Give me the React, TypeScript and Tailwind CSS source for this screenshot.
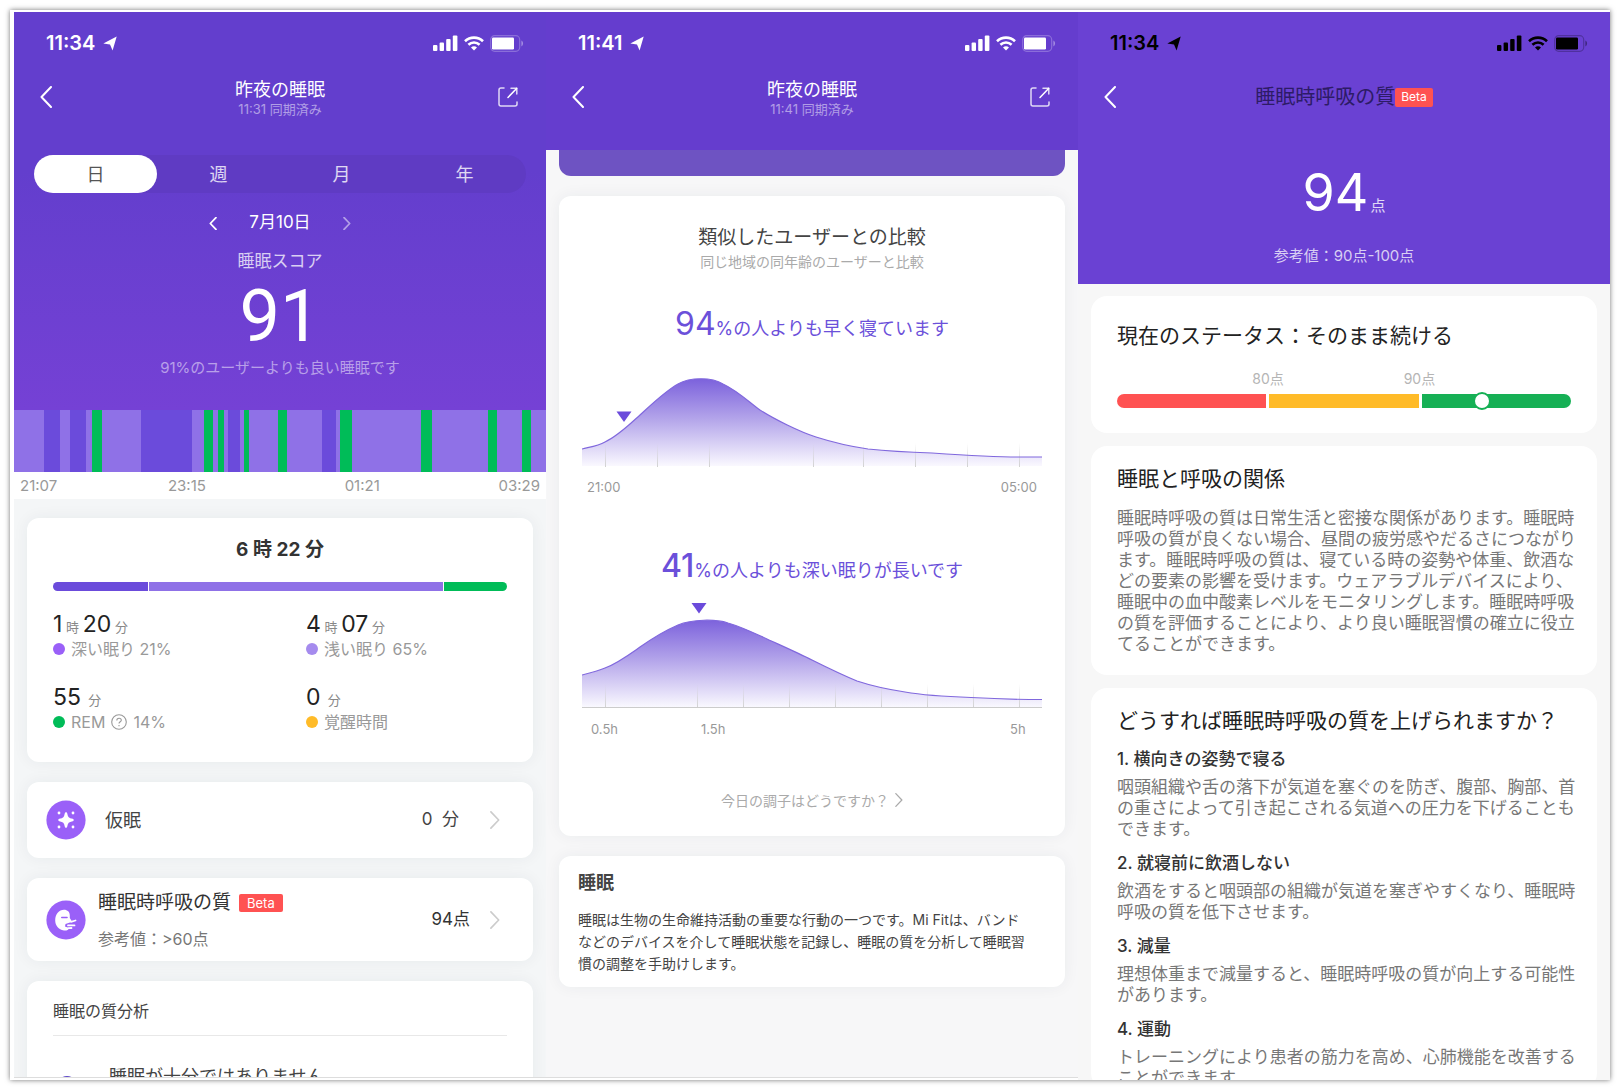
import { ReactNode } from "react";

const FONT = "font-['Inter','Noto_Sans_CJK_JP',sans-serif]";

function LocationArrow() {
  return (
    <svg viewBox="0 0 14 15" className="h-[15px] w-[14px]" aria-hidden="true">
      <path d="M0.3 7.6 13.7 0.6 9.6 14.4 7 8.4Z" fill="currentColor" />
      <path d="M7.6 6.600 10.600 4.200 8.900 8.800Z" fill="currentColor" fillOpacity="0.3" />
    </svg>
  );
}

function StatusIcons() {
  return (
    <div className="flex items-center gap-1.5">
      <svg viewBox="0 0 25 16" className="h-4 w-[25px]" aria-hidden="true" fill="currentColor">
        <rect x="0" y="10" width="4.4" height="6" rx="1" />
        <rect x="6.6" y="7.5" width="4.4" height="8.5" rx="1" />
        <rect x="13.2" y="4" width="4.4" height="12" rx="1" />
        <rect x="19.8" y="0.5" width="4.6" height="15.5" rx="1" />
      </svg>
      <svg viewBox="0 0 20 15" className="h-[15px] w-5" aria-hidden="true" fill="none" stroke="currentColor" strokeWidth="2.6">
        <path d="M1 5.2C6 .4 14 .4 19 5.2" />
        <path d="M4.4 8.8C7.6 5.8 12.4 5.8 15.6 8.8" />
        <path d="M7 11.4C8.8 9.9 11.2 9.9 13 11.4L10 14.6Z" fill="currentColor" stroke="none" />
      </svg>
      <svg viewBox="0 0 34 17" className="h-[17px] w-[34px]" aria-hidden="true">
        <rect x="0.7" y="0.7" width="29" height="15.6" rx="4" fill="none" stroke="currentColor" strokeOpacity="0.25" strokeWidth="1.2" />
        <rect x="2" y="2.6" width="22" height="11.8" rx="1.2" fill="currentColor" />
        <path d="M31.4 5.6C33.6 6.4 33.6 10.6 31.4 11.4Z" fill="currentColor" fillOpacity="0.4" />
      </svg>
    </div>
  );
}

function StatusBar({ time, dark = false }: { time: string; dark?: boolean }) {
  return (
    <div className={`flex h-[62px] items-center justify-between pr-[22px] pl-8 ${dark ? "text-black" : "text-white"}`}>
      <div className="flex items-center gap-2 text-[20px] leading-6 font-semibold">
        <span>{time}</span>
        <LocationArrow />
      </div>
      <StatusIcons />
    </div>
  );
}

function Chevron({ dir, className }: { dir: "left" | "right"; className: string }) {
  return (
    <svg viewBox="0 0 12 22" className={className} fill="none" stroke="currentColor" strokeWidth="2" strokeLinecap="round" strokeLinejoin="round" aria-hidden="true">
      <path d={dir === "left" ? "M11 1 1.5 11 11 21" : "M1 1 10.5 11 1 21"} />
    </svg>
  );
}

function NavBar({ children, share = false }: { children: ReactNode; share?: boolean }) {
  return (
    <div className="grid h-[46px] grid-cols-[40px_1fr_40px] items-center px-[18px] text-white">
      <button type="button" aria-label="戻る" className="flex h-10 items-center pl-2">
        <Chevron dir="left" className="h-[22px] w-3" />
      </button>
      <div className="flex flex-col items-center">{children}</div>
      {share && (
        <button type="button" aria-label="共有" className="flex h-10 items-center justify-end pr-2.5">
          <svg viewBox="0 0 20 20" className="size-5" fill="none" stroke="currentColor" strokeWidth="1.5" strokeLinecap="round" strokeLinejoin="round" aria-hidden="true">
            <path d="M6 1H3A2 2 0 0 0 1 3V17A2 2 0 0 0 3 19H17A2 2 0 0 0 19 17V15" strokeOpacity="0.8" />
            <path d="M13 1.2H18.8V7" strokeOpacity="0.8" />
            <path d="M18.6 1.4 10 10.4" />
          </svg>
        </button>
      )}
    </div>
  );
}

function SyncTitle({ time }: { time: string }) {
  return (
    <>
      <h1 className="pt-[3px] text-[18px] leading-5">昨夜の睡眠</h1>
      <p className="text-[13px] leading-[18px] text-white/50">{time} 同期済み</p>
    </>
  );
}

const STAGES: [number, string][] = [
  [30, "bg-[#8f71e7]"], [16, "bg-[#6b4bdb]"], [10, "bg-[#8f71e7]"], [16, "bg-[#6b4bdb]"], [6, "bg-[#8f71e7]"],
  [10, "bg-[#00bc58]"], [39, "bg-[#8f71e7]"], [51, "bg-[#6b4bdb]"], [12, "bg-[#8f71e7]"], [9, "bg-[#00bc58]"],
  [5, "bg-[#8f71e7]"], [6, "bg-[#00bc58]"], [4, "bg-[#8f71e7]"], [12, "bg-[#6b4bdb]"], [4, "bg-[#8f71e7]"],
  [5, "bg-[#00bc58]"], [29, "bg-[#8f71e7]"], [9, "bg-[#00bc58]"], [35, "bg-[#8f71e7]"], [14, "bg-[#6b4bdb]"],
  [4, "bg-[#8f71e7]"], [12, "bg-[#00bc58]"], [69, "bg-[#8f71e7]"], [11, "bg-[#00bc58]"], [56, "bg-[#8f71e7]"],
  [9, "bg-[#00bc58]"], [25, "bg-[#8f71e7]"], [9, "bg-[#00bc58]"], [15, "bg-[#8f71e7]"],
];

function Big({ children }: { children: ReactNode }) {
  return <span className="text-[23px] text-[#222]">{children}</span>;
}

function Stat({ value, dot, label }: { value: ReactNode; dot: string; label: ReactNode }) {
  return (
    <div>
      <dd className="h-[26px] text-[13px] leading-6 text-[#888]">{value}</dd>
      <dt className="flex h-[22px] items-center gap-1.5 text-[16px] leading-[22px] text-[#999]">
        <span className={`size-3 rounded-full ${dot}`} />
        {label}
      </dt>
    </div>
  );
}

const CARD = "rounded-xl bg-white shadow-[0_0_16px_rgba(40,50,60,0.06)]";

function SleepPanel() {
  return (
    <section className="mb-0.5 flex min-w-0 flex-col overflow-hidden border-b border-[#ddd] bg-[#f4f6f7]">
      <header className="bg-linear-to-b from-[#633ecd] from-40% to-[#7541d5] text-white">
        <StatusBar time="11:34" />
        <NavBar share>
          <SyncTitle time="11:31" />
        </NavBar>
        <div className="mx-5 mt-[35px] grid h-[38px] grid-cols-4 rounded-full bg-[#5f3bc3] text-[18px]">
          <button type="button" className="rounded-full bg-white text-[#555]">日</button>
          <button type="button" className="text-white/80">週</button>
          <button type="button" className="text-white/80">月</button>
          <button type="button" className="text-white/80">年</button>
        </div>
        <div className="mt-4 flex h-7 items-center justify-center gap-8 text-[17px]">
          <button type="button" aria-label="前の日"><Chevron dir="left" className="h-[13px] w-2 stroke-3" /></button>
          <span>7月10日</span>
          <button type="button" aria-label="次の日" className="text-white/50"><Chevron dir="right" className="h-[13px] w-2 stroke-3" /></button>
        </div>
        <p className="mt-3 text-center text-[17px] leading-6 text-white/75">睡眠スコア</p>
        <p className="mt-1 text-center font-['Liberation_Sans_Narrow','Roboto',sans-serif] text-[72px] leading-[79px]">91</p>
        <p className="pb-[30px] text-center text-[15px] leading-6 text-white/50">91%のユーザーよりも良い睡眠です</p>
      </header>
      <div className="flex h-[62px] shrink-0">
        {STAGES.map(([w, color], i) => (
          <div key={i} className={color} style={{ flexGrow: w, flexBasis: 0 }} />
        ))}
      </div>
      <div className="flex h-[27px] shrink-0 items-center justify-between bg-white px-1.5 text-[15px] leading-6 text-[#999]">
        <span>21:07</span>
        <span className="mr-7">23:15</span>
        <span className="mr-2">01:21</span>
        <span>03:29</span>
      </div>

      <div className="mt-[19px] flex shrink-0 flex-col gap-5 px-[13px]">
        <div className={`${CARD} px-[26px] pt-[18px] pb-[29px]`}>
          <h2 className="text-center text-[19px] leading-7 font-bold text-[#333]">6 時 22 分</h2>
          <div className="mt-[18px] flex h-[9px] gap-px overflow-hidden rounded-full">
            <div className="grow-21 bg-[#6b4bdb]" />
            <div className="grow-65 bg-[#8f71e7]" />
            <div className="grow-14 bg-[#00bc58]" />
          </div>
          <dl className="mt-[21px] grid grid-cols-[253px_1fr] gap-y-[25px]">
            <Stat value={<><Big>1</Big> 時 <Big>20</Big> 分</>} dot="bg-[#9a60f8]" label="深い眠り 21%" />
            <Stat value={<><Big>4</Big> 時 <Big>07</Big> 分</>} dot="bg-[#a58bee]" label="浅い眠り 65%" />
            <Stat
              value={<><Big>55</Big>&nbsp; 分</>}
              dot="bg-[#00bc58]"
              label={
                <>
                  REM
                  <svg viewBox="0 0 16 16" className="size-4" fill="none" stroke="currentColor" strokeWidth="1.1" aria-hidden="true">
                    <circle cx="8" cy="8" r="7.3" />
                    <path d="M5.8 6.4C5.8 3.4 10.3 3.6 10.3 6.2 10.3 7.8 8 7.8 8 9.6M8 10.9V12.2" />
                  </svg>
                  14%
                </>
              }
            />
            <Stat value={<><Big>0</Big>&nbsp; 分</>} dot="bg-[#ffbb28]" label="覚醒時間" />
          </dl>
        </div>

        <button type="button" className={`${CARD} flex h-[76px] items-center pr-[33px] pl-[19px] text-left text-[#444]`}>
          <NapIcon />
          <span className="ml-[19px] grow text-[18px]">仮眠</span>
          <span className="mr-[31px] text-[17px]">0&nbsp; 分</span>
          <Chevron dir="right" className="h-[18px] w-2.5 text-[#ccc]" />
        </button>

        <button type="button" className={`${CARD} flex h-[83px] items-center pr-[33px] pl-[19px] text-left`}>
          <BreathIcon />
          <span className="ml-3 flex grow flex-col gap-2.5">
            <span className="flex items-center gap-2 text-[19px] leading-7 text-[#333]">
              睡眠時呼吸の質
              <Beta className="h-[18px] px-2 text-[13px]" />
            </span>
            <span className="text-[16px] leading-6 text-[#777]">参考値：&gt;60点</span>
          </span>
          <span className="mr-5 text-[17px] text-[#333]">94点</span>
          <Chevron dir="right" className="h-[18px] w-2.5 text-[#ccc]" />
        </button>

        <div className={`${CARD} px-[26px]`}>
          <h2 className="border-b border-[#e8e8e8] pt-[18px] pb-3 text-[16px] leading-6 text-[#444]">睡眠の質分析</h2>
          <div className="flex h-20 items-center pl-1">
            <span className="mb-5 size-5 self-end rounded-full bg-[#5d48c8]" />
            <span className="ml-8 text-[18px] text-[#444]">睡眠が十分ではありません</span>
          </div>
        </div>
      </div>
    </section>
  );
}

function Beta({ className }: { className: string }) {
  return <span className={`flex items-center rounded-xs bg-[#ff5252] leading-4 text-white ${className}`}>Beta</span>;
}

function NapIcon() {
  return (
    <svg viewBox="0 0 40 40" className="size-10 shrink-0" aria-hidden="true">
      <circle cx="20" cy="20" r="19.6" fill="#9a60f8" />
      <path d="M20 13.500C20.800 18 22 19.200 26.500 20 22 20.800 20.800 22 20 26.500 19.200 22 18 20.800 13.500 20 18 19.200 19.200 18 20 13.500Z" fill="#fff" stroke="#fff" strokeWidth="2.4" strokeLinejoin="round" />
      <g fill="#fff">
        <circle cx="13" cy="13" r="1.4" />
        <circle cx="27" cy="13" r="1.4" />
        <circle cx="13" cy="27" r="1.4" />
        <circle cx="27" cy="27" r="1.4" />
      </g>
    </svg>
  );
}

function BreathIcon() {
  return (
    <svg viewBox="0 0 40 40" className="size-10 shrink-0" aria-hidden="true">
      <circle cx="20" cy="20" r="19.6" fill="#9a60f8" />
      <path d="M18 9.800C21.500 9.800 23.800 12 23.800 15.500V18L25.800 21.200 24 22.500 19.500 24 19 26.500 23 28C22.500 30 20.500 30.800 18 30.500 12.500 29.500 9.200 25.500 9.200 20.200 9.200 14 13 9.800 18 9.800Z" fill="#fff" />
      <path d="M15.800 17.500H21" stroke="#9a60f8" strokeWidth="1.6" strokeLinecap="round" />
      <path d="M25 21.800 29.500 20.500M22 25.400H28.500M22.500 28.200 25.500 28" stroke="#fff" strokeWidth="1.800" strokeLinecap="round" />
    </svg>
  );
}

type CurveProps = { id: string; line: string; ticks: number[]; marker: string; base?: boolean };

function Curve({ id, line, ticks, marker, base = false }: CurveProps) {
  return (
    <svg viewBox="0 0 460 110" className="block w-full" aria-hidden="true">
      <defs>
        <linearGradient id={id} x1="0" y1="22" x2="0" y2="110" gradientUnits="userSpaceOnUse">
          <stop offset="0" stopColor="#7c62dc" />
          <stop offset="0.45" stopColor="#b3a4ea" />
          <stop offset="1" stopColor="#fbfaff" />
        </linearGradient>
        <linearGradient id={`${id}-tick`} x1="0" y1="86" x2="0" y2="110" gradientUnits="userSpaceOnUse">
          <stop offset="0" stopColor="#ccc" stopOpacity="0" />
          <stop offset="1" stopColor="#ccc" stopOpacity="0.9" />
        </linearGradient>
      </defs>
      <path d={`${line}V109H0Z`} fill={`url(#${id})`} />
      {ticks.map((x) => (
        <rect key={x} x={x} y="86" width="1" height="24" fill={`url(#${id}-tick)`} />
      ))}
      {base && <rect x="0" y="109" width="460" height="1" fill="#ccc" />}
      <path d={line} fill="none" stroke="#8068dd" strokeWidth="1.2" />
      <path d={marker} fill="#6b4bdb" />
    </svg>
  );
}

function ComparePanel() {
  return (
    <section className="mb-0.5 flex min-w-0 flex-col overflow-hidden border-b border-[#ddd] bg-[#f7f7f8]">
      <header className="relative z-10 h-[138px] shrink-0 bg-[#653dce]">
        <StatusBar time="11:41" />
        <NavBar share>
          <SyncTitle time="11:41" />
        </NavBar>
      </header>
      <div className="flex shrink-0 flex-col gap-5 px-[13px]">
        <div className="h-[26px] rounded-b-xl bg-[#6e53c2]" />
        <div className={`${CARD} px-[23px] pt-[30px] pb-6 text-center`}>
          <h2 className="text-[19px] leading-6 text-[#444]">類似したユーザーとの比較</h2>
          <p className="text-[14px] leading-6 text-[#aaa]">同じ地域の同年齢のユーザーと比較</p>

          <p className="mt-[30px] text-[18px] leading-10 text-[#6b50da]"><span className="text-[32px]">94</span>%の人よりも早く寝ています</p>
          <div className="mt-2">
            <Curve
              id="bedtime"
              line="M0 92C8 90 16 89 23 85 36 79 48 67 58 58 68 49 82 35 96 27 108 20 130 20 141 27 156 34 168 46 178 53 192 62 218 75 234 80 256 87 272 90 286 92 310 94.500 335 95.500 350 96 380 98 410 100 437 100H460"
              ticks={[23, 75, 127, 231, 281, 333, 385, 437]}
              marker="M34.500 54.500H49.500L42 65Z"
            />
          </div>
          <div className="mt-[9px] flex h-6 items-center justify-between px-[5px] text-[13px] text-[#999]">
            <span>21:00</span>
            <span>05:00</span>
          </div>

          <p className="mt-[46px] text-[18px] leading-10 text-[#6b50da]"><span className="text-[32px] font-medium">41</span>%の人よりも深い眠りが長いです</p>
          <div className="mt-[7px]">
            <Curve
              id="deep"
              base
              line="M0 77C8 75 16 73 23 70 36 65 48 56 58 49 68 42 82 33 96 27 110 21 134 21 146 25 160 29 174 36 185 41 198 47 216 55 230 62 242 68 258 76 275 83 290 88 310 92 323 94 340 97 360 98.500 389 99.500 415 101 440 101.500 460 101.500"
              ticks={[23, 115, 161, 207, 253, 299, 345, 391, 437]}
              marker="M109.500 5H124.500L117 15.500Z"
            />
          </div>
          <div className="mt-2.5 grid h-6 grid-cols-[110px_1fr_26px] items-center pr-1.5 pl-[9px] text-left text-[13px] text-[#999]">
            <span>0.5h</span>
            <span>1.5h</span>
            <span>5h</span>
          </div>

          <button type="button" className="mx-auto mt-[46px] flex h-6 items-center gap-1.5 text-[14px] text-[#aaa]">
            今日の調子はどうですか？
            <Chevron dir="right" className="h-[14px] w-2" />
          </button>
        </div>

        <div className={`${CARD} pt-[13px] pr-3 pb-3 pl-[19px] text-[#444]`}>
          <h2 className="text-[18px] leading-7 font-bold">睡眠</h2>
          <p className="mt-3 text-[14px] leading-[22px]">
            睡眠は生物の生命維持活動の重要な行動の一つです。Mi Fitは、バンド
            <br />
            などのデバイスを介して睡眠状態を記録し、睡眠の質を分析して睡眠習
            <br />
            慣の調整を手助けします。
          </p>
        </div>
      </div>
    </section>
  );
}

const TIPS = [
  { title: "1. 横向きの姿勢で寝る", body: "咽頭組織や舌の落下が気道を塞ぐのを防ぎ、腹部、胸部、首の重さによって引き起こされる気道への圧力を下げることもできます。" },
  { title: "2. 就寝前に飲酒しない", body: "飲酒をすると咽頭部の組織が気道を塞ぎやすくなり、睡眠時呼吸の質を低下させます。" },
  { title: "3. 減量", body: "理想体重まで減量すると、睡眠時呼吸の質が向上する可能性があります。" },
  { title: "4. 運動", body: "トレーニングにより患者の筋力を高め、心肺機能を改善することができます。" },
];

const INFO_CARD = "rounded-2xl bg-white pl-[26px] pr-5";

function BreathPanel() {
  return (
    <section className="flex min-w-0 flex-col overflow-hidden bg-[#f7f7f7]">
      <header className="h-[272px] shrink-0 bg-[#6a41d3] text-white">
        <StatusBar time="11:34" dark />
        <NavBar>
          <h1 className="flex items-center text-[20px] leading-7 text-[#2d1b66]">
            睡眠時呼吸の質
            <Beta className="h-[19px] px-1.5 text-[12px]" />
          </h1>
        </NavBar>
        <p className="mt-[41px] flex h-16 items-baseline justify-center gap-0.5 text-[15px] leading-[64px]">
          <span className="text-[52px]">94</span>
          <span className="text-white/80">点</span>
        </p>
        <p className="mt-[19px] text-center text-[15px] leading-6 text-white/75">参考値：90点-100点</p>
      </header>
      <div className="mt-3 flex shrink-0 flex-col gap-[13px] px-[13px]">
        <div className={`${INFO_CARD} pt-[25px] pb-[25px]`}>
          <h2 className="text-[21px] leading-[30px] text-[#222]">現在のステータス：そのまま続ける</h2>
          <div className="mr-1.5">
            <div className="mt-4 grid grid-cols-3 text-[14px] leading-6 text-[#b5b5b5]">
              <span />
              <span className="-ml-4">80点</span>
              <span className="-ml-4">90点</span>
            </div>
            <div className="relative mt-[3px] flex h-[14px] gap-[3px]">
              <div className="grow rounded-l-full bg-[#ff5252]" />
              <div className="grow bg-[#ffbb28]" />
              <div className="grow rounded-r-full bg-[#16b055]" />
              <div className="absolute top-1/2 left-[80.3%] size-[18px] -translate-x-1/2 -translate-y-1/2 rounded-full border-2 border-[#16b055] bg-white" />
            </div>
          </div>
        </div>

        <div className={`${INFO_CARD} pt-[18px] pb-5`}>
          <h2 className="text-[21px] leading-[30px] text-[#222]">睡眠と呼吸の関係</h2>
          <p className="mt-3.5 text-[17px] leading-[21px] text-[#777]">
            睡眠時呼吸の質は日常生活と密接な関係があります。睡眠時呼吸の質が良くない場合、昼間の疲労感やだるさにつながります。睡眠時呼吸の質は、寝ている時の姿勢や体重、飲酒などの要素の影響を受けます。ウェアラブルデバイスにより、睡眠中の血中酸素レベルをモニタリングします。睡眠時呼吸の質を評価することにより、より良い睡眠習慣の確立に役立てることができます。
          </p>
        </div>

        <div className={`${INFO_CARD} pt-[18px]`}>
          <h2 className="text-[21px] leading-[30px] text-[#222]">どうすれば睡眠時呼吸の質を上げられますか？</h2>
          <div className="mt-[11px] flex flex-col gap-[11px]">
            {TIPS.map((tip) => (
              <div key={tip.title}>
                <h3 className="text-[17px] leading-6 font-medium text-[#333]">{tip.title}</h3>
                <p className="mt-1.5 text-[17px] leading-[21px] text-[#777]">{tip.body}</p>
              </div>
            ))}
          </div>
        </div>
      </div>
    </section>
  );
}

export default function App() {
  return (
    <div className={`h-screen bg-white p-2.5 ${FONT}`} lang="ja">
      <main className="grid h-full grid-cols-3 grid-rows-1 bg-white pt-0.5 pl-1 shadow-[0_0_5px_rgba(0,0,0,0.55)]">
        <SleepPanel />
        <ComparePanel />
        <BreathPanel />
      </main>
    </div>
  );
}
